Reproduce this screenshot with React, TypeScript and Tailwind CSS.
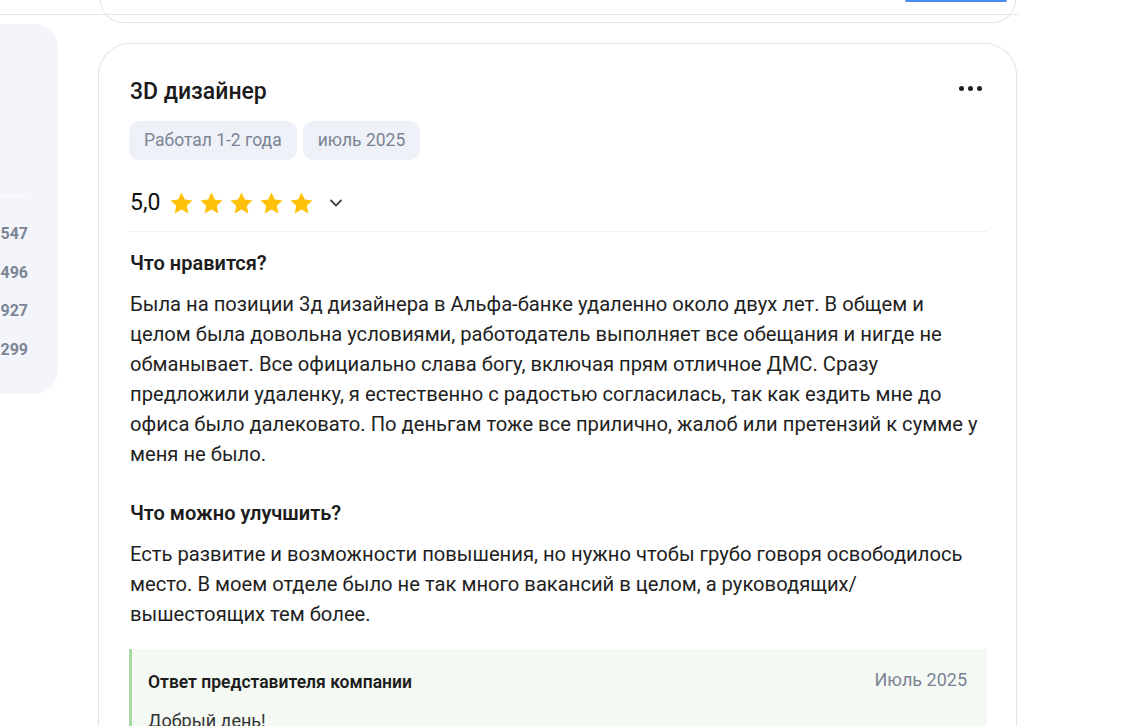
import { ChevronDown } from "lucide-react";

const likes =
  "Была на позиции 3д дизайнера в Альфа-банке удаленно около двух лет. В общем и целом была довольна условиями, работодатель выполняет все обещания и нигде не обманывает. Все официально слава богу, включая прям отличное ДМС. Сразу предложили удаленку, я естественно с радостью согласилась, так как ездить мне до офиса было далековато. По деньгам тоже все прилично, жалоб или претензий к сумме у меня не было.";

const improve =
  "Есть развитие и возможности повышения, но нужно чтобы грубо говоря освободилось место. В моем отделе было не так много вакансий в целом, а руководящих/ вышестоящих тем более.";

const counts = ["547", "496", "927", "299"];

function Star() {
  return (
    <svg viewBox="0 0 24 24" className="w-[27px] h-[27px]" fill="#ffc107">
      <path d="M12 2.2l2.95 6.3 6.85.8-5.08 4.7 1.35 6.8L12 17.4l-6.07 3.4 1.35-6.8L2.2 9.3l6.85-.8z" />
    </svg>
  );
}

export default function App() {
  return (
    <div className="min-h-screen bg-white overflow-hidden font-['Roboto',sans-serif] text-[#1c1c1c]">
      <div className="relative h-[23px]">
        <div className="absolute left-0 top-[14px] w-[1019px] h-px bg-[#e3e7ee]" />
        <div className="ml-[100px] w-[916px] h-full rounded-b-[30px] border border-t-0 border-[#dfe4ec] flex justify-end pr-[8px]">
          <div className="w-[102px] h-[2px] bg-[#4a8af4] rounded-b" />
        </div>
      </div>

      <div className="flex items-start">
        <div className="mt-px w-[58px] h-[370px] shrink-0 bg-[#f3f5fa] rounded-r-[24px] flex flex-col">
          <div className="h-[172px]" />
          <div className="w-[28px] h-px bg-white" />
          <div className="flex flex-col items-end pr-[30px] pt-[26px] gap-[16.5px]">
            {counts.map((c) => (
              <span key={c} className="text-[16px] leading-[22px] font-bold text-[#7b8595]">
                {c}
              </span>
            ))}
          </div>
        </div>

        <div className="ml-[40px] mt-[20px] w-[919px] h-[720px] shrink-0 rounded-t-[32px] border border-b-0 border-[#dfe4ec] pl-[31px] pr-[29px] pt-[34px]">
          <div className="flex items-start justify-between">
            <h2 className="text-[23px] leading-[28px] font-medium text-[#1a1a1a]">3D дизайнер</h2>
            <div className="flex gap-[4px] mt-[8px] mr-[5px]">
              <span className="w-[5px] h-[5px] rounded-full bg-[#1f1f1f]" />
              <span className="w-[5px] h-[5px] rounded-full bg-[#1f1f1f]" />
              <span className="w-[5px] h-[5px] rounded-full bg-[#1f1f1f]" />
            </div>
          </div>

          <div className="flex gap-[6px] mt-[15px] -ml-px">
            <span className="h-[39px] px-[15px] flex items-center rounded-[10px] bg-[#eef1f7] text-[17.5px] text-[#7b8494]">
              Работал 1-2 года
            </span>
            <span className="h-[39px] px-[15px] flex items-center rounded-[10px] bg-[#eef1f7] text-[17.5px] text-[#7b8494]">
              июль 2025
            </span>
          </div>

          <div className="mt-[27px] pb-[12px] border-b border-[#eef0f5] flex items-center">
            <span className="text-[23px] leading-[32px] text-[#111]">5,0</span>
            <div className="flex gap-[3px] ml-[8px]">
              <Star />
              <Star />
              <Star />
              <Star />
              <Star />
            </div>
            <ChevronDown className="w-[20px] h-[20px] ml-[11px] text-[#444]" strokeWidth={2.2} />
          </div>

          <h3 className="mt-[19px] text-[20px] leading-[24px] font-semibold">Что нравится?</h3>
          <p className="mt-[14px] text-[20.2px] leading-[30px] text-[#1f1f1f]">{likes}</p>

          <h3 className="mt-[32px] text-[20px] leading-[24px] font-semibold">Что можно улучшить?</h3>
          <p className="mt-[14px] text-[20.2px] leading-[30px] text-[#1f1f1f]">{improve}</p>

          <div className="mt-[20px] -ml-px border-l-[3px] border-[#a8d9a3] bg-[#f4f9f3] pl-[16px] pr-[20px] pt-[21px] pb-[20px]">
            <div className="flex items-center justify-between">
              <span className="text-[17.5px] leading-[24px] font-semibold text-[#1c1c1c]">
                Ответ представителя компании
              </span>
              <span className="text-[18px] leading-[24px] text-[#7b8494] -mt-[5px]">Июль 2025</span>
            </div>
            <p className="mt-[14px] text-[18px] leading-[26px] text-[#333]">Добрый день!</p>
          </div>
        </div>
      </div>
    </div>
  );
}
